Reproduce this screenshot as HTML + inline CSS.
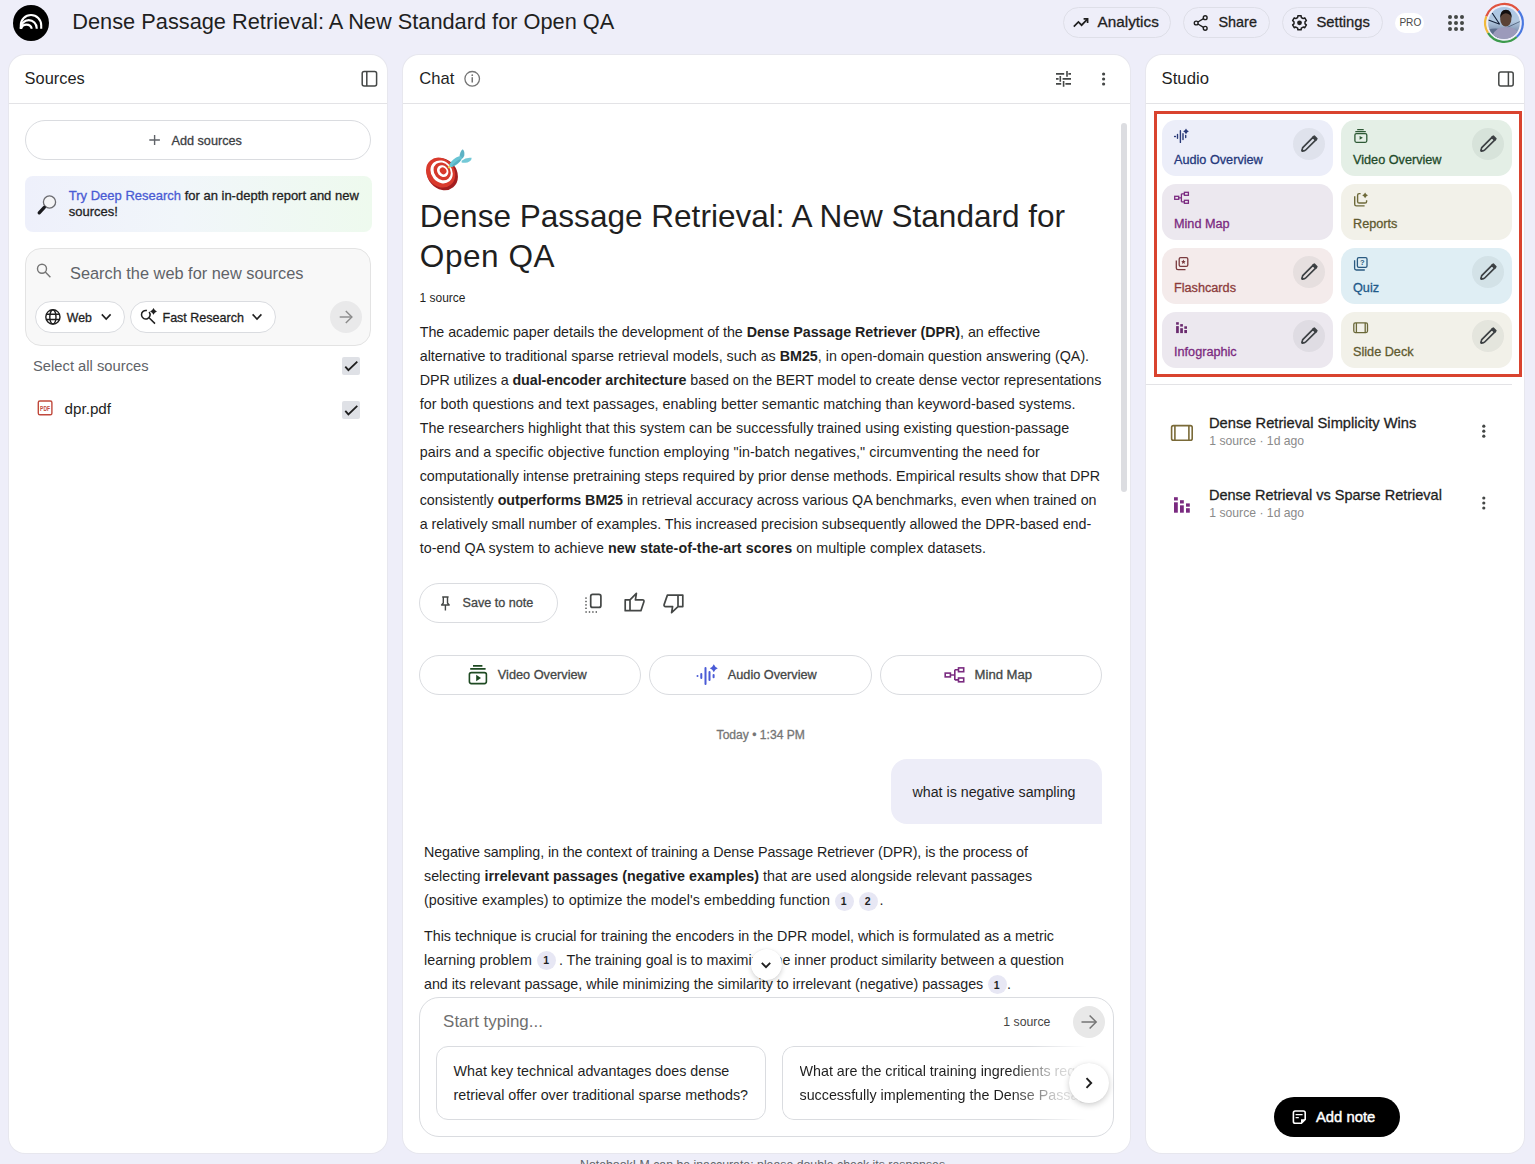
<!DOCTYPE html>
<html><head><meta charset="utf-8"><style>
*{box-sizing:border-box;margin:0;padding:0}
html,body{width:1535px;height:1164px;overflow:hidden}
body{background:#eeeef9;font-family:"Liberation Sans",sans-serif;color:#1f1f1f;position:relative}
.a{position:absolute}
.t{position:absolute;white-space:nowrap;line-height:1}
.panel{position:absolute;background:#fff;border-radius:16px;top:55px;height:1098px;box-shadow:0 0 0 1px #e7e7ee}
svg.a{display:block;overflow:visible}
b{font-weight:700}
.cite{}
.m{-webkit-text-stroke:0.3px}
</style></head><body>
<svg class="a" style="left:13px;top:5px;" width="36" height="36" viewBox="0 0 36 36"><circle cx="18" cy="18" r="18" fill="#000"/><g fill="none" stroke="#fff" stroke-width="2.1"><path d="M7.8,23.8 V20.15 A10.2,10.2 0 0 1 28.2,20.15 V23.8"/><path d="M7.8,23.8 V23.1 A7.95,7.95 0 0 1 23.7,23.1 V23.8"/><path d="M8.1,23.8 A5.5,5.5 0 0 1 18.8,23.8"/></g></svg>
<div class="t " style="left:72.30px;top:11.46px;font-size:21.78px;color:#1f1f1f;">Dense Passage Retrieval: A New Standard for Open QA</div>
<div class="a" style="left:1063px;top:7px;width:108px;height:31px;border:1px solid #dedfe8;border-radius:16px;"></div>
<div class="a" style="left:1183px;top:7px;width:87px;height:31px;border:1px solid #dedfe8;border-radius:16px;"></div>
<div class="a" style="left:1282px;top:7px;width:101px;height:31px;border:1px solid #dedfe8;border-radius:16px;"></div>
<div class="t m" style="left:1097.60px;top:14.45px;font-size:15.3px;color:#1f1f1f;">Analytics</div>
<div class="t m" style="left:1218.50px;top:15.21px;font-size:14.4px;color:#1f1f1f;">Share</div>
<div class="t m" style="left:1316.50px;top:14.87px;font-size:14.8px;color:#1f1f1f;">Settings</div>
<div class="a" style="left:1395px;top:13px;width:29px;height:20px;background:#fff;border-radius:10px;"></div>
<div class="t " style="left:1399.40px;top:18.05px;font-size:10.1px;color:#4a4a4a;">PRO</div>
<div class="panel" style="left:9px;width:378px"></div>
<div class="panel" style="left:403px;width:727px"></div>
<div class="panel" style="left:1146px;width:378px"></div>
<div class="a" style="left:9px;top:103px;width:378px;height:1px;background:#e3e3e6;"></div>
<div class="a" style="left:403px;top:103px;width:727px;height:1px;background:#e3e3e6;"></div>
<div class="a" style="left:1146px;top:103px;width:378px;height:1px;background:#e3e3e6;"></div>
<div class="t " style="left:24.60px;top:70.02px;font-size:16.4px;color:#1f1f1f;">Sources</div>
<div class="t " style="left:419.30px;top:71.15px;font-size:16.6px;color:#1f1f1f;">Chat</div>
<div class="t " style="left:1161.60px;top:71.06px;font-size:16.7px;color:#1f1f1f;">Studio</div>
<div class="a" style="left:25px;top:120px;width:346px;height:40px;border:1px solid #dadce0;border-radius:20px;"></div>
<div class="t m" style="left:171.50px;top:134.88px;font-size:12.66px;color:#3c4043;">Add sources</div>
<div class="a" style="left:25px;top:176px;width:347px;height:56px;border-radius:8px;background:linear-gradient(90deg,#eef0fb 0%,#f1f6fa 45%,#eefaee 100%);"></div>
<div class="t m" style="left:68.80px;top:189.30px;font-size:13.0px;color:#1f1f1f;"><span style="color:#4a5bd4">Try Deep Research</span> for an in-depth report and new</div>
<div class="t m" style="left:68.80px;top:205.30px;font-size:13.0px;color:#1f1f1f;">sources!</div>
<div class="a" style="left:25px;top:248px;width:346px;height:98px;border:1px solid #e3e3e3;border-radius:16px;background:#f8f8f8;"></div>
<div class="t " style="left:70.00px;top:264.86px;font-size:16.35px;color:#5f6368;">Search the web for new sources</div>
<div class="a" style="left:35px;top:301px;width:90px;height:32px;border:1px solid #dadce0;border-radius:16px;background:#fff;"></div>
<div class="t m" style="left:66.80px;top:312.29px;font-size:12.3px;color:#1f1f1f;">Web</div>
<div class="a" style="left:130px;top:301px;width:146px;height:32px;border:1px solid #dadce0;border-radius:16px;background:#fff;"></div>
<div class="t m" style="left:162.50px;top:312.09px;font-size:12.53px;color:#1f1f1f;">Fast Research</div>
<div class="a" style="left:330px;top:301px;width:32px;height:32px;border-radius:50%;background:#e9e9ea;"></div>
<div class="t " style="left:33.00px;top:359.31px;font-size:14.75px;color:#5f6368;">Select all sources</div>
<div class="a" style="left:342px;top:357px;width:18px;height:18px;background:#dfe1e6;border-radius:2px;"></div>
<div class="t " style="left:64.50px;top:401.11px;font-size:15.23px;color:#1f1f1f;">dpr.pdf</div>
<div class="a" style="left:342px;top:401px;width:18px;height:18px;background:#dfe1e6;border-radius:2px;"></div>
<div class="t " style="left:419.80px;top:201.19px;font-size:31.55px;color:#1f1f1f;">Dense Passage Retrieval: A New Standard for</div>
<div class="t " style="left:419.80px;top:241.29px;font-size:31.55px;color:#1f1f1f;letter-spacing:0.55px;">Open QA</div>
<div class="t " style="left:419.50px;top:292.15px;font-size:11.99px;color:#1f1f1f;">1 source</div>
<div class="t" id="p1_0" style="left:419.7px;top:325.10px;font-size:14.3px;color:#1f1f1f;letter-spacing:-0.0412px">The academic paper details the development of the <b>Dense Passage Retriever (DPR)</b>, an effective</div>
<div class="t" id="p1_1" style="left:419.7px;top:349.10px;font-size:14.3px;color:#1f1f1f;letter-spacing:-0.0126px">alternative to traditional sparse retrieval models, such as <b>BM25</b>, in open-domain question answering (QA).</div>
<div class="t" id="p1_2" style="left:419.7px;top:373.10px;font-size:14.3px;color:#1f1f1f;letter-spacing:-0.0672px">DPR utilizes a <b>dual-encoder architecture</b> based on the BERT model to create dense vector representations</div>
<div class="t" id="p1_3" style="left:419.7px;top:397.10px;font-size:14.3px;color:#1f1f1f;letter-spacing:0.0341px">for both questions and text passages, enabling better semantic matching than keyword-based systems.</div>
<div class="t" id="p1_4" style="left:419.7px;top:421.10px;font-size:14.3px;color:#1f1f1f;letter-spacing:0.0181px">The researchers highlight that this system can be successfully trained using existing question-passage</div>
<div class="t" id="p1_5" style="left:419.7px;top:445.10px;font-size:14.3px;color:#1f1f1f;letter-spacing:0.0770px">pairs and a specific objective function employing "in-batch negatives," circumventing the need for</div>
<div class="t" id="p1_6" style="left:419.7px;top:469.10px;font-size:14.3px;color:#1f1f1f;letter-spacing:-0.0059px">computationally intense pretraining steps required by prior dense methods. Empirical results show that DPR</div>
<div class="t" id="p1_7" style="left:419.7px;top:493.10px;font-size:14.3px;color:#1f1f1f;letter-spacing:-0.0571px">consistently <b>outperforms BM25</b> in retrieval accuracy across various QA benchmarks, even when trained on</div>
<div class="t" id="p1_8" style="left:419.7px;top:517.10px;font-size:14.3px;color:#1f1f1f;letter-spacing:-0.0441px">a relatively small number of examples. This increased precision subsequently allowed the DPR-based end-</div>
<div class="t" id="p1_9" style="left:419.7px;top:541.10px;font-size:14.3px;color:#1f1f1f;letter-spacing:0.0538px">to-end QA system to achieve <b>new state-of-the-art scores</b> on multiple complex datasets.</div>
<div class="t" id="p2_0" style="left:424px;top:844.80px;font-size:14.3px;color:#1f1f1f;letter-spacing:-0.0841px">Negative sampling, in the context of training a Dense Passage Retriever (DPR), is the process of</div>
<div class="t" id="p2_1" style="left:424px;top:868.70px;font-size:14.3px;color:#1f1f1f;letter-spacing:0.0100px">selecting <b>irrelevant passages (negative examples)</b> that are used alongside relevant passages</div>
<div class="t" id="p2_2" style="left:424px;top:892.80px;font-size:14.3px;color:#1f1f1f;letter-spacing:0.0710px">(positive examples) to optimize the model's embedding function</div>
<div class="t" id="p2_3" style="left:424px;top:928.70px;font-size:14.3px;color:#1f1f1f;letter-spacing:-0.0094px">This technique is crucial for training the encoders in the DPR model, which is formulated as a metric</div>
<div class="t" id="p2_4" style="left:424px;top:952.70px;font-size:14.3px;color:#1f1f1f;letter-spacing:0.0867px">learning problem</div>
<div class="t" id="p2_5" style="left:559px;top:952.70px;font-size:14.3px;color:#1f1f1f;letter-spacing:-0.0314px">. The training goal is to maximize the inner product similarity between a question</div>
<div class="t" id="p2_6" style="left:424px;top:976.80px;font-size:14.3px;color:#1f1f1f;letter-spacing:-0.0290px">and its relevant passage, while minimizing the similarity to irrelevant (negative) passages</div>
<div class="a" style="left:834.5px;top:891.5px;width:19.0px;height:19.0px;border-radius:50%;background:#e7e7f4;"></div>
<div class="t " style="left:840.70px;top:896.21px;font-size:10.5px;color:#1f1f1f;font-weight:700;">1</div>
<div class="a" style="left:858.5px;top:891.5px;width:19.0px;height:19.0px;border-radius:50%;background:#e7e7f4;"></div>
<div class="t " style="left:864.70px;top:896.21px;font-size:10.5px;color:#1f1f1f;font-weight:700;">2</div>
<div class="t " style="left:879.50px;top:892.80px;font-size:14.3px;color:#1f1f1f;">.</div>
<div class="a" style="left:537px;top:950.5px;width:19px;height:19.0px;border-radius:50%;background:#e7e7f4;"></div>
<div class="t " style="left:543.20px;top:955.21px;font-size:10.5px;color:#1f1f1f;font-weight:700;">1</div>
<div class="a" style="left:987.5px;top:975px;width:19.0px;height:19px;border-radius:50%;background:#e7e7f4;"></div>
<div class="t " style="left:993.70px;top:979.71px;font-size:10.5px;color:#1f1f1f;font-weight:700;">1</div>
<div class="t " style="left:1007.00px;top:976.80px;font-size:14.3px;color:#1f1f1f;">.</div>
<div class="a" style="left:419px;top:583px;width:139px;height:40px;border:1px solid #dadce0;border-radius:20px;"></div>
<div class="t m" style="left:462.50px;top:596.52px;font-size:12.62px;color:#444746;">Save to note</div>
<div class="a" style="left:419px;top:655px;width:222px;height:40px;border:1px solid #dadce0;border-radius:20px;"></div>
<div class="a" style="left:649px;top:655px;width:223px;height:40px;border:1px solid #dadce0;border-radius:20px;"></div>
<div class="a" style="left:880px;top:655px;width:222px;height:40px;border:1px solid #dadce0;border-radius:20px;"></div>
<div class="t m" style="left:497.80px;top:668.72px;font-size:12.74px;color:#444746;">Video Overview</div>
<div class="t m" style="left:727.80px;top:668.74px;font-size:12.71px;color:#444746;">Audio Overview</div>
<div class="t m" style="left:974.60px;top:668.41px;font-size:13.1px;color:#444746;">Mind Map</div>
<div class="t m" style="left:716.60px;top:728.56px;font-size:12.1px;color:#757575;">Today • 1:34 PM</div>
<div class="a" style="left:891px;top:759px;width:211px;height:65px;background:#ededf8;border-radius:16px 16px 0 16px;"></div>
<div class="t " style="left:912.50px;top:785.35px;font-size:14.24px;color:#1f1f1f;">what is negative sampling</div>
<div class="a" style="left:1121px;top:123px;width:6px;height:369px;background:#dcdde1;border-radius:3px;"></div>
<div class="a" style="left:419px;top:997px;width:695px;height:140px;border:1px solid #dadce0;border-radius:20px;background:#fff;"></div>
<div class="t " style="left:443.10px;top:1014.35px;font-size:16.95px;color:#6f6f6f;">Start typing...</div>
<div class="t " style="left:1003.30px;top:1015.60px;font-size:12.28px;color:#444;">1 source</div>
<div class="a" style="left:1073px;top:1006px;width:32px;height:32px;border-radius:50%;background:#e8e8e8;"></div>
<div class="a" style="left:436px;top:1046px;width:330px;height:74px;border:1px solid #dadce0;border-radius:12px;"></div>
<div class="t " style="left:453.50px;top:1063.80px;font-size:14.3px;color:#1f1f1f;">What key technical advantages does dense</div>
<div class="t " style="left:453.50px;top:1087.90px;font-size:14.3px;color:#1f1f1f;">retrieval offer over traditional sparse methods?</div>
<div class="a" style="left:782px;top:1046px;width:331px;height:74px;border:1px solid #dadce0;border-right:none;border-radius:12px 0 0 12px;-webkit-mask-image:linear-gradient(90deg,#000 75%,transparent 92%)"></div>
<div class="a" style="left:799.5px;top:1046px;width:300px;height:74px;overflow:hidden;-webkit-mask-image:linear-gradient(90deg,#000 70%,rgba(0,0,0,.25) 85%,transparent 96%)"><div class="t " style="left:0.00px;top:17.80px;font-size:14.3px;color:#1f1f1f;">What are the critical training ingredients required for</div>
<div class="t " style="left:0.00px;top:41.90px;font-size:14.3px;color:#1f1f1f;">successfully implementing the Dense Passage Retriever?</div>
</div>
<div class="a" style="left:1069px;top:1063px;width:40px;height:40px;border-radius:50%;background:#fff;box-shadow:0 2px 6px rgba(0,0,0,.2),0 0 1px rgba(0,0,0,.08);"></div>
<div class="a" style="left:750.5px;top:949px;width:31.0px;height:31px;border-radius:50%;background:#fff;box-shadow:0 2px 5px rgba(0,0,0,.17),0 0 1px rgba(0,0,0,.08);"></div>
<div class="t " style="left:580.00px;top:1158.59px;font-size:12.3px;color:#5f6368;">NotebookLM can be inaccurate; please double check its responses.</div>
<div class="a" style="left:1154px;top:110.5px;width:368px;height:266.5px;border:3px solid #d9432f;"></div>
<div class="a" style="left:1162px;top:120px;width:171px;height:56px;background:#eceef9;border-radius:14px;"></div>
<div class="t m" style="left:1174.00px;top:153.77px;font-size:12.68px;color:#25387c;">Audio Overview</div>
<div class="a" style="left:1293px;top:128px;width:32px;height:32px;border-radius:50%;background:rgba(60,64,67,.07);"></div>
<div class="a" style="left:1341px;top:120px;width:171px;height:56px;background:#e4efe6;border-radius:14px;"></div>
<div class="t m" style="left:1353.00px;top:153.77px;font-size:12.68px;color:#1f4b2a;">Video Overview</div>
<div class="a" style="left:1472px;top:128px;width:32px;height:32px;border-radius:50%;background:rgba(60,64,67,.07);"></div>
<div class="a" style="left:1162px;top:184px;width:171px;height:56px;background:#ece8ef;border-radius:14px;"></div>
<div class="t m" style="left:1174.00px;top:217.77px;font-size:12.68px;color:#7b2a80;">Mind Map</div>
<div class="a" style="left:1341px;top:184px;width:171px;height:56px;background:#f2f1e9;border-radius:14px;"></div>
<div class="t m" style="left:1353.00px;top:217.77px;font-size:12.68px;color:#5f5a30;">Reports</div>
<div class="a" style="left:1162px;top:248px;width:171px;height:56px;background:#f4ebeb;border-radius:14px;"></div>
<div class="t m" style="left:1174.00px;top:281.77px;font-size:12.68px;color:#8c3b3b;">Flashcards</div>
<div class="a" style="left:1293px;top:256px;width:32px;height:32px;border-radius:50%;background:rgba(60,64,67,.07);"></div>
<div class="a" style="left:1341px;top:248px;width:171px;height:56px;background:#dfeef4;border-radius:14px;"></div>
<div class="t m" style="left:1353.00px;top:281.77px;font-size:12.68px;color:#1f5a8a;">Quiz</div>
<div class="a" style="left:1472px;top:256px;width:32px;height:32px;border-radius:50%;background:rgba(60,64,67,.07);"></div>
<div class="a" style="left:1162px;top:312px;width:171px;height:56px;background:#ece8ef;border-radius:14px;"></div>
<div class="t m" style="left:1174.00px;top:345.77px;font-size:12.68px;color:#7b2a80;">Infographic</div>
<div class="a" style="left:1293px;top:320px;width:32px;height:32px;border-radius:50%;background:rgba(60,64,67,.07);"></div>
<div class="a" style="left:1341px;top:312px;width:171px;height:56px;background:#f2f1e9;border-radius:14px;"></div>
<div class="t m" style="left:1353.00px;top:345.77px;font-size:12.68px;color:#5f5a30;">Slide Deck</div>
<div class="a" style="left:1472px;top:320px;width:32px;height:32px;border-radius:50%;background:rgba(60,64,67,.07);"></div>
<div class="a" style="left:1146px;top:384px;width:366px;height:1px;background:#e3e3e6;"></div>
<div class="t m" style="left:1209.00px;top:415.96px;font-size:14.7px;color:#1f1f1f;">Dense Retrieval Simplicity Wins</div>
<div class="t " style="left:1209.30px;top:435.27px;font-size:12.2px;color:#8a8a8a;">1 source · 1d ago</div>
<div class="t m" style="left:1209.00px;top:488.13px;font-size:14.5px;color:#1f1f1f;">Dense Retrieval vs Sparse Retrieval</div>
<div class="t " style="left:1209.30px;top:507.37px;font-size:12.2px;color:#8a8a8a;">1 source · 1d ago</div>
<div class="a" style="left:1274px;top:1097px;width:126px;height:40px;background:#000;border-radius:20px;"></div>
<div class="t m" style="left:1316.00px;top:1110.07px;font-size:14.8px;color:#fff;-webkit-text-stroke:0.45px #fff;">Add note</div>
<svg class="a" style="left:0;top:0" width="1535" height="1164" viewBox="0 0 1535 1164"><g fill="none" stroke="#1f1f1f" stroke-width="1.7"><path d="M1073.8,26.6 L1078.4,22 L1081.6,25.2 L1087.2,19.4"/><path d="M1083.6,18.9 H1087.6 V22.9"/></g><g fill="none" stroke="#1f1f1f" stroke-width="1.4"><circle cx="1205.2" cy="17.7" r="1.9"/><circle cx="1196.2" cy="23" r="1.9"/><circle cx="1205.2" cy="28.3" r="1.9"/><path d="M1197.9,22 L1203.5,18.7 M1197.9,24 L1203.5,27.3"/></g><path d="M1297.88,15.78 L1301.12,15.78 L1301.32,17.51 L1303.17,18.57 L1304.77,17.89 L1306.39,20.69 L1305.00,21.73 L1305.00,23.87 L1306.39,24.91 L1304.77,27.71 L1303.17,27.03 L1301.32,28.09 L1301.12,29.82 L1297.88,29.82 L1297.68,28.09 L1295.83,27.03 L1294.23,27.71 L1292.61,24.91 L1294.00,23.87 L1294.00,21.73 L1292.61,20.69 L1294.23,17.89 L1295.83,18.57 L1297.68,17.51 Z" fill="none" stroke="#1f1f1f" stroke-width="1.5" stroke-linejoin="round"/><circle cx="1299.5" cy="22.8" r="2.4" fill="#1f1f1f"/><circle cx="1450" cy="17" r="2" fill="#444746"/><circle cx="1450" cy="22.9" r="2" fill="#444746"/><circle cx="1450" cy="28.9" r="2" fill="#444746"/><circle cx="1456" cy="17" r="2" fill="#444746"/><circle cx="1456" cy="22.9" r="2" fill="#444746"/><circle cx="1456" cy="28.9" r="2" fill="#444746"/><circle cx="1462" cy="17" r="2" fill="#444746"/><circle cx="1462" cy="22.9" r="2" fill="#444746"/><circle cx="1462" cy="28.9" r="2" fill="#444746"/><path d="M1486.24,16.44 A18.9,18.9 0 0 1 1518.48,10.75" fill="none" stroke="#e0533f" stroke-width="2.2"/><path d="M1518.48,10.75 A18.9,18.9 0 0 1 1516.65,36.95" fill="none" stroke="#4a78e0" stroke-width="2.2"/><path d="M1516.65,36.95 A18.9,18.9 0 0 1 1487.97,32.92" fill="none" stroke="#3c9a4c" stroke-width="2.2"/><path d="M1487.97,32.92 A18.9,18.9 0 0 1 1486.24,16.44" fill="none" stroke="#f0b93a" stroke-width="2.2"/><defs><clipPath id="avc"><circle cx="1504" cy="22.9" r="15.9"/></clipPath><linearGradient id="sky" x1="0" y1="0" x2="0" y2="1"><stop offset="0" stop-color="#a9c6e6"/><stop offset="0.45" stop-color="#b3c9e0"/><stop offset="0.75" stop-color="#7f92b0"/><stop offset="1" stop-color="#6d7a98"/></linearGradient></defs><g clip-path="url(#avc)"><rect x="1487" y="6" width="34" height="34" fill="url(#sky)"/><path d="M1487,30 Q1494,27.5 1500,29 L1500,40 H1487 Z" fill="#5f6f8e"/><path d="M1488.4,20.1 L1499.8,24.3 M1492.2,13 L1499.5,24" stroke="#142038" stroke-width="1.1"/><path d="M1520,21.5 L1507,27.5" stroke="#3a4a66" stroke-width="0.7"/><path d="M1491,40 Q1493,30 1501,27.5 Q1506,26.5 1511,27.5 Q1519,30 1521,40 Z" fill="#9c9abb"/><ellipse cx="1505.8" cy="19" rx="5.6" ry="7.4" fill="#5b4337"/><path d="M1500.2,18.5 Q1499.8,10 1505.9,9.8 Q1512,10 1511.7,18.5 Q1510.5,13.5 1505.9,13.3 Q1501.5,13.5 1500.2,18.5 Z" fill="#120e0e"/></g><g fill="none" stroke="#444746" stroke-width="1.5"><rect x="362.2" y="71.6" width="14.4" height="14.3" rx="2"/><path d="M366.8,71.6 V85.9"/></g><g fill="none" stroke="#444746" stroke-width="1.5"><rect x="1498.8" y="71.9" width="14.4" height="14.1" rx="2"/><path d="M1508.4,71.9 V86"/></g><path d="M149.3,140 H159.9 M154.6,135 V145" stroke="#5f6368" stroke-width="1.4"/><circle cx="49.5" cy="202" r="6.1" fill="#f4f4f6" stroke="#6b6b70" stroke-width="1.3"/><path d="M44.3,207.4 L39.2,212.8" stroke="#1a1a1e" stroke-width="3.3" stroke-linecap="round"/><g fill="none" stroke="#757575" stroke-width="1.4"><circle cx="42" cy="268.7" r="4.5"/><path d="M45.3,272 L50.4,277.2"/></g><g fill="none" stroke="#1f1f1f" stroke-width="1.4"><circle cx="52.9" cy="316.9" r="7.1"/><ellipse cx="52.9" cy="316.9" rx="3.1" ry="7.1"/><path d="M46.3,314.3 H59.5 M46.3,319.5 H59.5"/></g><path d="M101.8,314.4 L106.2,319.0 L110.60000000000001,314.4" fill="none" stroke="#1f1f1f" stroke-width="1.6"/><path d="M149.09,311.94 A4.3,4.3 0 1 1 146.91,310.55" fill="none" stroke="#1f1f1f" stroke-width="1.5"/><path d="M149.3,318 L155,323.6" stroke="#1f1f1f" stroke-width="1.5"/><path d="M153.5,308.0 Q154.452,310.448 156.9,311.4 Q154.452,312.352 153.5,314.79999999999995 Q152.548,312.352 150.1,311.4 Q152.548,310.448 153.5,308.0 Z" fill="#1f1f1f"/><path d="M252.6,314.4 L257,319.0 L261.4,314.4" fill="none" stroke="#1f1f1f" stroke-width="1.6"/><g fill="none" stroke="#8a8a8a" stroke-width="1.4"><path d="M339.7,317 H352"/><path d="M345.8,310.9 L351.9,317 L345.8,323.1"/></g><path d="M345.3,366.6 L348.4,370.2 L357.3,361.6" fill="none" stroke="#1f1f1f" stroke-width="1.8"/><path d="M345.3,410.8 L348.4,414.4 L357.3,405.8" fill="none" stroke="#1f1f1f" stroke-width="1.8"/><rect x="38.3" y="401" width="13.6" height="13.8" rx="1.6" fill="none" stroke="#c0493c" stroke-width="1.4"/><text x="40.1" y="410.7" font-family="Liberation Sans" font-weight="700" font-size="7.2" fill="#c0493c" textLength="9.9" lengthAdjust="spacingAndGlyphs">PDF</text><g fill="none" stroke="#757575" stroke-width="1.3"><circle cx="472.2" cy="78.8" r="7.3"/></g><rect x="471.5" y="77.2" width="1.5" height="5.3" fill="#757575"/><circle cx="472.25" cy="75.2" r="0.9" fill="#757575"/><g stroke="#444746" stroke-width="1.6" fill="none"><path d="M1056,73.9 H1064.2 M1068.4,73.9 H1071 M1067,71 V76.8"/><path d="M1056,78.9 H1058.6 M1062.6,78.9 H1071 M1060.3,76 V81.8"/><path d="M1056,83.9 H1061.2 M1065.4,83.9 H1071 M1063.6,81 V86.8"/></g><circle cx="1103.6" cy="74" r="1.6" fill="#444746"/><circle cx="1103.6" cy="79" r="1.6" fill="#444746"/><circle cx="1103.6" cy="84" r="1.6" fill="#444746"/><circle cx="1483.8" cy="426.2" r="1.6" fill="#444746"/><circle cx="1483.8" cy="431.2" r="1.6" fill="#444746"/><circle cx="1483.8" cy="436.2" r="1.6" fill="#444746"/><circle cx="1483.8" cy="498" r="1.6" fill="#444746"/><circle cx="1483.8" cy="503" r="1.6" fill="#444746"/><circle cx="1483.8" cy="508" r="1.6" fill="#444746"/><g><ellipse cx="442.3" cy="174.2" rx="14.6" ry="17" fill="#a31d1f" transform="rotate(-40 442.3 174.2)"/><ellipse cx="440.6" cy="172.6" rx="13.6" ry="15.9" fill="#d93a2d" transform="rotate(-40 440.6 172.6)"/><ellipse cx="441.6" cy="171.9" rx="10.4" ry="12.2" fill="#fff" transform="rotate(-40 441.6 171.9)"/><ellipse cx="442.2" cy="171.4" rx="8" ry="9.5" fill="#d5392b" transform="rotate(-40 442.2 171.4)"/><ellipse cx="442.7" cy="171.1" rx="5.3" ry="6.3" fill="#fff" transform="rotate(-40 442.7 171.1)"/><ellipse cx="443.1" cy="170.8" rx="3.1" ry="3.6" fill="#d8392b" transform="rotate(-40 443.1 170.8)"/><path d="M447.4,168.4 L449.6,164.6 L451.8,167 Z" fill="#f0d040"/><path d="M459.6,157.2 Q459.6,151.5 462.8,149.2 Q465,151.2 464.2,156 Q463,159 460.8,159.6 Z" fill="#5db2c4"/><path d="M461.6,160.8 Q466,157 471.6,157.8 Q471.8,161 467.5,162.4 Q464,163.2 461.6,162.6 Z" fill="#74c9d7"/><ellipse cx="455.6" cy="161.6" rx="7.6" ry="3.1" fill="#68c4d4" transform="rotate(-38 455.6 161.6)"/><ellipse cx="456.4" cy="162.8" rx="5.5" ry="1.1" fill="#4a9fb2" opacity="0.55" transform="rotate(-38 456.4 162.8)"/></g><g fill="none" stroke="#444746" stroke-width="1.4" stroke-linejoin="round"><path d="M442.2,597 H448.6 M443.3,597 V603 L441.6,605 H449.2 L447.5,603 V597 M445.4,605 V610.5"/></g><rect x="590.7" y="594.4" width="10.2" height="13" rx="2" fill="none" stroke="#444746" stroke-width="1.7"/><rect x="585.3" y="597.4" width="1.4" height="1.4" fill="#444746"/><rect x="585.3" y="600.8" width="1.4" height="1.4" fill="#444746"/><rect x="585.3" y="604.1999999999999" width="1.4" height="1.4" fill="#444746"/><rect x="585.3" y="607.6" width="1.4" height="1.4" fill="#444746"/><rect x="585.4" y="611.3" width="1.4" height="1.4" fill="#444746"/><rect x="588.8" y="611.3" width="1.4" height="1.4" fill="#444746"/><rect x="592.1999999999999" y="611.3" width="1.4" height="1.4" fill="#444746"/><rect x="595.6" y="611.3" width="1.4" height="1.4" fill="#444746"/><path d="M625.2,599.8 H630 V610.7 H625.2 Z M630,599.8 L636.4,593.3 L635.4,599.8 H642.4 Q644.3,599.8 643.9,601.8 L640.9,610.7 H630" fill="none" stroke="#444746" stroke-width="1.7" stroke-linejoin="round"/><path d="M682.8,606.6 H678 V595.1 H682.8 Z M678,606.6 L671.6,612.6 L672.6,606.6 H665.6 Q663.7,606.6 664.1,604.6 L667.4,595.1 H678" fill="none" stroke="#444746" stroke-width="1.7" stroke-linejoin="round"/><g fill="none" stroke="#1e4a22" stroke-width="1.6"><path d="M473,665.9 H482.4 M470.2,668.9 H485.6"/><rect x="469.4" y="672.6" width="17" height="11" rx="2"/></g><path d="M476.2,674.8 L481,677.9 L476.2,681.2 Z" fill="#1e4a22"/><g stroke="#4a5bd6" stroke-width="2" stroke-linecap="round"><path d="M697.5,676 V676.1 M701.3,674 V678 M705.5,668 V684 M709.5,672 V680 M713.6,675 V677.2"/></g><path d="M713.8,664.2 Q714.92,667.08 717.8,668.2 Q714.92,669.32 713.8,672.2 Q712.68,669.32 709.8,668.2 Q712.68,667.08 713.8,664.2 Z" fill="#4a5bd6"/><g fill="none" stroke="#7a2b80" stroke-width="1.6"><rect x="945.2" y="673.1" width="5.2" height="3.8"/><rect x="958.5" y="667.9" width="5.2" height="3.8"/><rect x="958.5" y="678" width="5.2" height="3.8"/><path d="M950.4,675 H954.8 M954.8,669.8 V679.9 M954.8,669.8 H958.5 M954.8,679.9 H958.5"/></g><path d="M761.8,962.9 L766,967.1 L770.2,962.9" fill="none" stroke="#1f1f1f" stroke-width="1.9"/><g fill="none" stroke="#757575" stroke-width="1.5"><path d="M1081.5,1022 H1096.2"/><path d="M1089.6,1015.5 L1096.1,1022 L1089.6,1028.5"/></g><path d="M1086.5,1078.2 L1091.2,1083 L1086.5,1087.8" fill="none" stroke="#1f1f1f" stroke-width="1.9"/><g stroke="#2a3a78" stroke-width="1.4" stroke-linecap="round"><path d="M1174.6,136.5 H1175.4 M1177.5,134.5 V138.3 M1180.4,130.8 V142.4 M1183,133.6 V139.5 M1185.7,135.4 V137.5"/></g><path d="M1186,128.4 Q1186.812,130.488 1188.9,131.3 Q1186.812,132.11200000000002 1186,134.20000000000002 Q1185.188,132.11200000000002 1183.1,131.3 Q1185.188,130.488 1186,128.4 Z" fill="#2a3a78"/><g fill="none" stroke="#2e5a36" stroke-width="1.3"><path d="M1357.2,129.6 H1363.7 M1355.3,131.6 H1365.8"/><rect x="1354.9" y="133.6" width="11.9" height="8.7" rx="1.5"/></g><path d="M1359.6,135.9 L1362.9,137.8 L1359.6,139.8 Z" fill="#2e5a36"/><g fill="none" stroke="#7b2a80" stroke-width="1.3"><rect x="1174.7" y="196.3" width="4" height="3"/><rect x="1184.4" y="192.3" width="4" height="3"/><rect x="1184.4" y="200.3" width="4" height="3"/><path d="M1178.7,197.8 H1181.4 M1181.4,193.8 V201.8 M1181.4,193.8 H1184.4 M1181.4,201.8 H1184.4"/></g><g fill="none" stroke="#6e6a3a" stroke-width="1.4" stroke-linejoin="round"><path d="M1354.7,196.2 V204.2 Q1354.7,205.9 1356.4,205.9 H1364.6"/><path d="M1360.6,193.6 H1359.2 Q1357.6,193.6 1357.6,195.2 V201.4 Q1357.6,203 1359.2,203 H1365 Q1366.6,203 1366.6,201.4 V200.2"/></g><path d="M1365.1,192.4 Q1365.9119999999998,194.488 1368.0,195.3 Q1365.9119999999998,196.11200000000002 1365.1,198.20000000000002 Q1364.288,196.11200000000002 1362.1999999999998,195.3 Q1364.288,194.488 1365.1,192.4 Z" fill="#6e6a3a"/><g fill="none" stroke="#7a3a3e" stroke-width="1.3" stroke-linejoin="round"><rect x="1179.2" y="257.6" width="8.6" height="8.8" rx="1.4"/><path d="M1176.3,260.4 V268 Q1176.3,269.7 1178,269.7 H1185.5"/></g><path d="M1183.4,259.6 L1184.1,261.1 L1185.6,261.3 L1184.5,262.3 L1184.8,263.9 L1183.4,263.1 L1182,263.9 L1182.3,262.3 L1181.2,261.3 L1182.7,261.1 Z" fill="#7a3a3e"/><g fill="none" stroke="#2a5a80" stroke-width="1.3" stroke-linejoin="round"><rect x="1357.4" y="257.7" width="9.6" height="9.7" rx="1.4"/><path d="M1354.6,260.2 V268.3 Q1354.6,270 1356.3,270 H1364.8"/></g><text x="1362.2" y="265.2" font-family="Liberation Sans" font-size="7.5" font-weight="700" fill="#2a5a80" text-anchor="middle">?</text><rect x="1176.1" y="322.2" width="2.7" height="2.5" fill="#6a2a6e"/><rect x="1176.1" y="326.1" width="2.7" height="7.0" fill="#6a2a6e"/><rect x="1180.2" y="324.1" width="2.7" height="2.5" fill="#6a2a6e"/><rect x="1180.2" y="328.2" width="2.7" height="4.9" fill="#6a2a6e"/><rect x="1184.3" y="326.3" width="2.7" height="2.5" fill="#6a2a6e"/><rect x="1184.3" y="330" width="2.7" height="3.1" fill="#6a2a6e"/><g fill="none" stroke="#6a6838" stroke-width="1.3"><rect x="1353.8" y="322.9" width="13.7" height="9.7" rx="1.5"/><path d="M1356.4,322.9 V332.6 M1365.2,322.9 V332.6"/></g><g transform="translate(1309,144) rotate(45)"><path d="M-1.9,-8.2 H1.9 V6.6 Q1.9,7.2 1.5,7.8 L0.4,9.6 Q0,10.2 -0.4,9.6 L-1.5,7.8 Q-1.9,7.2 -1.9,6.6 Z" fill="none" stroke="#3c4043" stroke-width="1.7" stroke-linejoin="round"/><rect x="-2.75" y="-10.2" width="5.5" height="3.6" rx="1.2" fill="#3c4043"/></g><g transform="translate(1488,144) rotate(45)"><path d="M-1.9,-8.2 H1.9 V6.6 Q1.9,7.2 1.5,7.8 L0.4,9.6 Q0,10.2 -0.4,9.6 L-1.5,7.8 Q-1.9,7.2 -1.9,6.6 Z" fill="none" stroke="#3c4043" stroke-width="1.7" stroke-linejoin="round"/><rect x="-2.75" y="-10.2" width="5.5" height="3.6" rx="1.2" fill="#3c4043"/></g><g transform="translate(1309,272) rotate(45)"><path d="M-1.9,-8.2 H1.9 V6.6 Q1.9,7.2 1.5,7.8 L0.4,9.6 Q0,10.2 -0.4,9.6 L-1.5,7.8 Q-1.9,7.2 -1.9,6.6 Z" fill="none" stroke="#3c4043" stroke-width="1.7" stroke-linejoin="round"/><rect x="-2.75" y="-10.2" width="5.5" height="3.6" rx="1.2" fill="#3c4043"/></g><g transform="translate(1488,272) rotate(45)"><path d="M-1.9,-8.2 H1.9 V6.6 Q1.9,7.2 1.5,7.8 L0.4,9.6 Q0,10.2 -0.4,9.6 L-1.5,7.8 Q-1.9,7.2 -1.9,6.6 Z" fill="none" stroke="#3c4043" stroke-width="1.7" stroke-linejoin="round"/><rect x="-2.75" y="-10.2" width="5.5" height="3.6" rx="1.2" fill="#3c4043"/></g><g transform="translate(1309,336) rotate(45)"><path d="M-1.9,-8.2 H1.9 V6.6 Q1.9,7.2 1.5,7.8 L0.4,9.6 Q0,10.2 -0.4,9.6 L-1.5,7.8 Q-1.9,7.2 -1.9,6.6 Z" fill="none" stroke="#3c4043" stroke-width="1.7" stroke-linejoin="round"/><rect x="-2.75" y="-10.2" width="5.5" height="3.6" rx="1.2" fill="#3c4043"/></g><g transform="translate(1488,336) rotate(45)"><path d="M-1.9,-8.2 H1.9 V6.6 Q1.9,7.2 1.5,7.8 L0.4,9.6 Q0,10.2 -0.4,9.6 L-1.5,7.8 Q-1.9,7.2 -1.9,6.6 Z" fill="none" stroke="#3c4043" stroke-width="1.7" stroke-linejoin="round"/><rect x="-2.75" y="-10.2" width="5.5" height="3.6" rx="1.2" fill="#3c4043"/></g><g fill="none" stroke="#7a6a38" stroke-width="1.6"><rect x="1171.6" y="425.6" width="20.6" height="14.6" rx="1.8"/><path d="M1174.9,425.6 V440.2 M1188.9,425.6 V440.2"/></g><rect x="1174" y="497.2" width="3.8" height="3.3" fill="#7a2a80"/><rect x="1174" y="502.3" width="3.8" height="10.4" fill="#7a2a80"/><rect x="1180" y="500.2" width="3.8" height="3.3" fill="#7a2a80"/><rect x="1180" y="505.3" width="3.8" height="7.4" fill="#7a2a80"/><rect x="1186" y="503.4" width="3.8" height="3.3" fill="#7a2a80"/><rect x="1186" y="508.2" width="3.8" height="4.5" fill="#7a2a80"/><g fill="none" stroke="#fff" stroke-width="1.6" stroke-linejoin="round"><path d="M1295.2,1111 H1303.4 Q1305.2,1111 1305.2,1112.8 V1119.4 L1301.4,1123.2 H1295.2 Q1293.4,1123.2 1293.4,1121.4 V1112.8 Q1293.4,1111 1295.2,1111 Z"/></g><path d="M1295.6,1114.7 H1302.6 M1295.6,1117.7 H1298.8" stroke="#fff" stroke-width="1.3"/><path d="M1301,1119.2 H1305.2 L1301,1123.4 Z" fill="#fff"/></svg>
</body></html>
